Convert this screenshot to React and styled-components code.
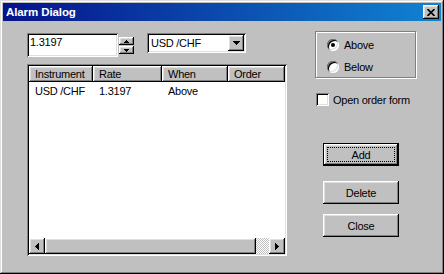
import React from "react";
import styled, { createGlobalStyle, css } from "styled-components";

const GlobalStyle = createGlobalStyle`
  html, body {
    margin: 0;
    padding: 0;
    background: #c0c0c0;
  }
  body {
    font-family: "Liberation Sans", Arial, sans-serif;
    font-size: 11px;
    letter-spacing: -0.25px;
    color: #000;
  }
`;

const raised = css`
  background: #c0c0c0;
  box-shadow: inset -1px -1px #000, inset 1px 1px #fff,
    inset -2px -2px #808080, inset 2px 2px #dfdfdf;
`;

const sunken = css`
  background: #fff;
  box-shadow: inset 1px 1px #808080, inset -1px -1px #fff,
    inset 2px 2px #000, inset -2px -2px #dfdfdf;
`;

const Window = styled.div`
  width: 444px;
  height: 274px;
  box-sizing: border-box;
  padding: 3px;
  background: #c0c0c0;
  box-shadow: inset -1px -1px #000, inset 1px 1px #dfdfdf,
    inset -2px -2px #808080, inset 2px 2px #fff;
  display: flex;
  flex-direction: column;
`;

const TitleBar = styled.div`
  height: 18px;
  flex: none;
  display: flex;
  align-items: center;
  justify-content: space-between;
  padding: 0 2px 0 3px;
  background: linear-gradient(to right, #06128a, #1084d0);
`;

const Title = styled.span`
  color: #fff;
  font-weight: bold;
  font-size: 11.5px;
  letter-spacing: -0.1px;
`;

const CloseButton = styled.div`
  ${raised};
  width: 16px;
  height: 14px;
  display: flex;
  align-items: center;
  justify-content: center;
`;

const Body = styled.div`
  flex: 1;
  display: flex;
  padding: 10px 0 0 24px;
`;

const LeftColumn = styled.div`
  width: 260px;
  padding-top: 2px;
  display: flex;
  flex-direction: column;
`;

const InputRow = styled.div`
  display: flex;
  align-items: flex-start;
  height: 24px;
`;

const Field = styled.div`
  ${sunken};
  width: 91px;
  height: 24px;
  box-sizing: border-box;
  padding: 3px 0 0 3px;
  line-height: 12px;
`;

const Spinner = styled.div`
  margin: 4px 0 0 1px;
  display: flex;
  flex-direction: column;
  gap: 1px;
`;

const SpinButton = styled.div`
  ${raised};
  width: 15px;
  height: 8px;
  display: flex;
  align-items: center;
  justify-content: center;
`;

const Combo = styled.div`
  ${sunken};
  margin-left: 13px;
  width: 99px;
  height: 20px;
  box-sizing: border-box;
  padding: 2px;
  display: flex;
  align-items: center;
  justify-content: space-between;
`;

const ComboText = styled.span`
  padding-left: 2px;
`;

const DropButton = styled.div`
  ${raised};
  width: 16px;
  height: 16px;
  display: flex;
  align-items: center;
  justify-content: center;
`;

const ListView = styled.div`
  ${sunken};
  margin-top: 7px;
  height: 192px;
  box-sizing: border-box;
  padding: 2px;
  display: flex;
  flex-direction: column;
`;

const Header = styled.div`
  display: flex;
  height: 16px;
  flex: none;
`;

const HeaderCell = styled.div`
  ${raised};
  width: ${(p) => (p.$w ? `${p.$w}px` : "auto")};
  flex: ${(p) => (p.$w ? "none" : 1)};
  box-sizing: border-box;
  padding-left: 6px;
  line-height: 16px;
`;

const Rows = styled.div`
  flex: 1;
`;

const Row = styled.div`
  display: flex;
  height: 16px;
  margin-top: 1px;
  line-height: 16px;
`;

const Cell = styled.div`
  width: ${(p) => p.$w}px;
  padding-left: 6px;
  box-sizing: border-box;
`;

const ScrollBar = styled.div`
  display: flex;
  height: 16px;
  flex: none;
`;

const ScrollArrow = styled.div`
  ${raised};
  width: 16px;
  height: 16px;
  display: flex;
  align-items: center;
  justify-content: center;
`;

const Thumb = styled.div`
  ${raised};
  width: 211px;
`;

const Track = styled.div`
  flex: 1;
  background: repeating-conic-gradient(#fff 0 25%, #c0c0c0 0 50%) 0 0 / 2px 2px;
`;

const RightColumn = styled.div`
  margin-left: 28px;
  width: 101px;
  display: flex;
  flex-direction: column;
`;

const GroupBox = styled.div`
  height: 47px;
  box-sizing: border-box;
  border: 1px solid #808080;
  box-shadow: inset 1px 1px #fff, 1px 1px #fff;
  padding: 5px 0 0 11px;
  display: flex;
  flex-direction: column;
  gap: 6px;
`;

const OptionRow = styled.label`
  display: flex;
  align-items: center;
  gap: 5px;
  height: 16px;
`;

const Radio = styled.span`
  width: 12px;
  height: 12px;
  border-radius: 50%;
  background: #fff;
  box-shadow: inset 1px 1px #808080, inset -1px -1px #fff,
    inset 2px 2px #000, inset -2px -2px #dfdfdf;
  position: relative;
  &::after {
    content: "";
    display: ${(p) => (p.$checked ? "block" : "none")};
    position: absolute;
    left: 4px;
    top: 4px;
    width: 4px;
    height: 4px;
    border-radius: 50%;
    background: #000;
  }
`;

const CheckRow = styled.label`
  margin: 15px 0 0 1px;
  display: flex;
  align-items: center;
  gap: 4px;
  height: 13px;
`;

const CheckBox = styled.span`
  ${sunken};
  width: 13px;
  height: 13px;
`;

const Buttons = styled.div`
  margin: 37px 0 0 8px;
  display: flex;
  flex-direction: column;
`;

const Button = styled.div`
  ${raised};
  width: 76px;
  height: 23px;
  margin-top: ${(p) => p.$top || 0}px;
  box-sizing: border-box;
  display: flex;
  align-items: center;
  justify-content: center;
  position: relative;
  ${(p) =>
    p.$default &&
    css`
      box-shadow: inset 0 0 0 1px #000, inset -2px -2px #000,
        inset 2px 2px #fff, inset -3px -3px #808080, inset 3px 3px #dfdfdf;
      &::after {
        content: "";
        position: absolute;
        inset: 4px;
        border: 1px dotted #000;
      }
    `}
`;

const Tri = ({ dir, w, h }) => {
  const pts = {
    up: `0,${h} ${w},${h} ${w / 2},0`,
    down: `0,0 ${w},0 ${w / 2},${h}`,
    left: `${w},0 ${w},${h} 0,${h / 2}`,
    right: `0,0 0,${h} ${w},${h / 2}`,
  }[dir];
  return (
    <svg width={w} height={h} viewBox={`0 0 ${w} ${h}`}>
      <polygon points={pts} fill="#000" shapeRendering="crispEdges" />
    </svg>
  );
};

const columns = [
  { label: "Instrument", w: 64 },
  { label: "Rate", w: 69 },
  { label: "When", w: 66 },
  { label: "Order" },
];

const alarms = [{ instrument: "USD /CHF", rate: "1.3197", when: "Above", order: "" }];

const App = () => {
  return (
    <>
      <GlobalStyle />
      <Window>
        <TitleBar>
          <Title>Alarm Dialog</Title>
          <CloseButton>
            <svg width="8" height="7" viewBox="0 0 8 7">
              <path d="M0.5 0 L7.5 7 M7.5 0 L0.5 7" stroke="#000" strokeWidth="1.6" />
            </svg>
          </CloseButton>
        </TitleBar>
        <Body>
          <LeftColumn>
            <InputRow>
              <Field>1.3197</Field>
              <Spinner>
                <SpinButton>
                  <Tri dir="up" w={5} h={3} />
                </SpinButton>
                <SpinButton>
                  <Tri dir="down" w={5} h={3} />
                </SpinButton>
              </Spinner>
              <Combo>
                <ComboText>USD /CHF</ComboText>
                <DropButton>
                  <Tri dir="down" w={7} h={4} />
                </DropButton>
              </Combo>
            </InputRow>
            <ListView>
              <Header>
                {columns.map((c) => (
                  <HeaderCell key={c.label} $w={c.w}>
                    {c.label}
                  </HeaderCell>
                ))}
              </Header>
              <Rows>
                {alarms.map((a) => (
                  <Row key={a.instrument}>
                    <Cell $w={64}>{a.instrument}</Cell>
                    <Cell $w={69}>{a.rate}</Cell>
                    <Cell $w={66}>{a.when}</Cell>
                    <Cell $w={55}>{a.order}</Cell>
                  </Row>
                ))}
              </Rows>
              <ScrollBar>
                <ScrollArrow>
                  <Tri dir="left" w={4} h={7} />
                </ScrollArrow>
                <Thumb />
                <Track />
                <ScrollArrow>
                  <Tri dir="right" w={4} h={7} />
                </ScrollArrow>
              </ScrollBar>
            </ListView>
          </LeftColumn>
          <RightColumn>
            <GroupBox>
              <OptionRow>
                <Radio $checked />
                Above
              </OptionRow>
              <OptionRow>
                <Radio />
                Below
              </OptionRow>
            </GroupBox>
            <CheckRow>
              <CheckBox />
              Open order form
            </CheckRow>
            <Buttons>
              <Button $default>Add</Button>
              <Button $top={15}>Delete</Button>
              <Button $top={10}>Close</Button>
            </Buttons>
          </RightColumn>
        </Body>
      </Window>
    </>
  );
};

export default App;
